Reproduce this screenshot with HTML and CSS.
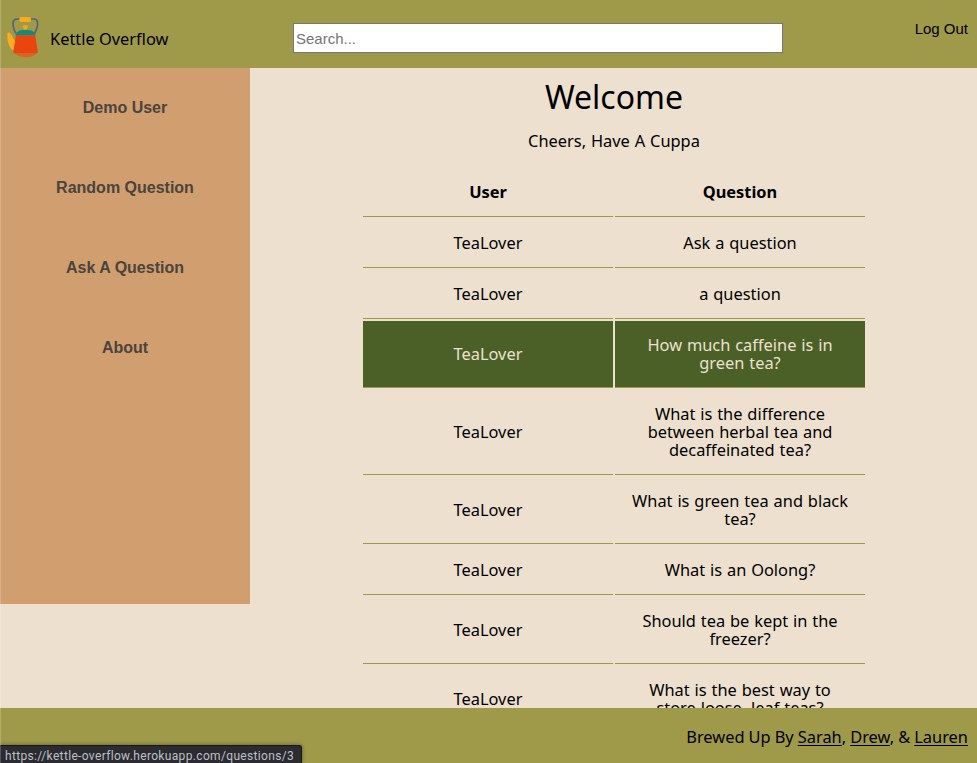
FILE: index.html
```
<!DOCTYPE html>
<html lang="en">
<head>
<meta charset="utf-8">
<title>Kettle Overflow</title>
<link rel="stylesheet" href="styles.css">
</head>
<body>
<header class="topbar">
  <a class="brand">
    <svg class="kettle" viewBox="0 0 34 42" aria-hidden="true">
      <path d="M9 17.500C6 13 5.500 7 6.500 5Q7.500 3 10 3H27Q30 3 30.500 6C31 10 29.500 14 27.500 17.500" fill="none" stroke="#56657a" stroke-width="1.700"/>
      <rect x="12.500" y="1" width="11.500" height="5" rx="1.500" fill="#f7aa20"/>
      <path d="M0.500 17C1.500 15.500 4 17 5 20L8.500 26L6.500 34.500C1.500 32 -.5 23 .5 17Z" fill="#fbac20"/>
      <path d="M15.300 10.500Q15.300 9 18.200 9Q21.200 9 21.200 10.500L19.800 13V15H16.800V13Z" fill="#f3a51e"/>
      <path d="M8.500 19.500Q9 16 12.500 14.500Q18.500 13 24.500 14.500Q28 16 28.500 19.500Z" fill="#128a80"/>
      <path d="M9 19.200H28.200L30.800 35.500Q31 37.500 29 37.500H8.500Q6 37.500 6.300 35.500Z" fill="#e8450f"/>
      <path d="M7.500 37H30Q26 41.200 19 41.200Q11 41.200 7.500 37Z" fill="#da651e"/>
    </svg>
    <span class="brand-name">Kettle Overflow</span>
  </a>
  <input class="search" type="text" placeholder="Search...">
  <a class="logout">Log Out</a>
</header>
<div class="page">
  <nav class="sidebar">
    <a>Demo User</a>
    <a>Random Question</a>
    <a>Ask A Question</a>
    <a>About</a>
  </nav>
  <main class="content">
    <h1>Welcome</h1>
    <p class="tagline">Cheers, Have A Cuppa</p>
    <table class="questions">
      <thead><tr><th>User</th><th>Question</th></tr></thead>
      <tbody>
        <tr><td>TeaLover</td><td>Ask a question</td></tr>
        <tr><td>TeaLover</td><td>a question</td></tr>
        <tr class="active"><td>TeaLover</td><td>How much caffeine is in<br>green tea?</td></tr>
        <tr><td>TeaLover</td><td>What is the difference<br>between herbal tea and<br>decaffeinated tea?</td></tr>
        <tr><td>TeaLover</td><td>What is green tea and black<br>tea?</td></tr>
        <tr><td>TeaLover</td><td>What is an Oolong?</td></tr>
        <tr><td>TeaLover</td><td>Should tea be kept in the<br>freezer?</td></tr>
        <tr><td>TeaLover</td><td>What is the best way to<br>store loose, leaf teas?</td></tr>
      </tbody>
    </table>
  </main>
</div>
<footer class="footer"><p>Brewed Up By <a>Sarah</a>, <a>Drew</a>, &amp; <a>Lauren</a></p></footer>
<div class="link-status">https://kettle-overflow.herokuapp.com/questions/3</div>
</body>
</html>
```
FILE: styles.css
```
* { box-sizing: border-box; }

body {
  margin: 0;
  height: 763px;
  display: flex;
  flex-direction: column;
  overflow: hidden;
  background: #ede0cf;
  color: #000;
  font: 16.4px/18px "Noto Sans", sans-serif;
  word-spacing: .6px;
}

/* faint window edge */
body::after {
  content: "";
  position: absolute;
  left: 0;
  top: 0;
  width: 1px;
  height: 763px;
  background: rgba(255, 255, 255, .2);
}

.topbar {
  height: 68px;
  flex: none;
  display: flex;
  align-items: flex-start;
  background: #9f994a;
}

.brand {
  width: 293px;
  display: flex;
  padding: 16px 0 0 7px;
}

.kettle { width: 34px; height: 42px; }

.brand-name { margin: 14px 0 0 9px; word-spacing: 0; }

.search {
  width: 490px;
  height: 30px;
  margin-top: 23px;
  padding: 1px 2px;
  border: 1px solid #767676;
  background: #fff;
  font: 15px "Liberation Sans", sans-serif;
}

.search::placeholder { color: #757575; }

.logout {
  margin: 20px 9px 0 auto;
  font: 15px/18px "Liberation Sans", sans-serif;
  word-spacing: 0;
}

.page {
  flex: 1;
  min-height: 0;
  display: flex;
  align-items: flex-start;
  overflow: hidden;
}

.sidebar {
  width: 250px;
  height: 536px;
  flex: none;
  display: flex;
  flex-direction: column;
  background: #d19e70;
  text-align: center;
  font: bold 16px/80px "Liberation Sans", sans-serif;
  word-spacing: 0;
  color: #4a443c;
}

.content {
  flex: 1;
  padding-left: 1px;
  display: flex;
  flex-direction: column;
  align-items: center;
}

h1 {
  margin: 9px 0 0;
  font-size: 32px;
  line-height: 40px;
  font-weight: 400;
}

.tagline { margin: 15px 0 16px; }

.questions {
  width: 506px;
  table-layout: fixed;
  border-spacing: 2px;
  text-align: center;
}

.questions th,
.questions td {
  width: 250px;
  padding: 15px 0;
  border-bottom: 1px solid #9f994a;
}

.active { color: #ede0cf; }
.active td { background: #4b6027; }

.footer {
  height: 55px;
  flex: none;
  padding: 20px 9px 0 0;
  background: #9f994a;
  text-align: right;
  word-spacing: -.2px;
}

.footer p { margin: 0; }
.footer a { text-decoration: underline; text-underline-offset: 2px; text-decoration-thickness: 1px; }

.link-status {
  position: absolute;
  left: 0;
  bottom: 0;
  width: 302px;
  height: 18px;
  padding-left: 5px;
  border-top: 1px solid #17171b;
  border-right: 1px solid #17171b;
  border-radius: 0 3px 0 0;
  background: #2b2b31;
  color: #bdc1c6;
  font: 12px/20px Roboto, sans-serif;
  letter-spacing: .34px;
  white-space: nowrap;
  box-shadow: 0 0 4px rgba(0, 0, 0, .4);
}
```
